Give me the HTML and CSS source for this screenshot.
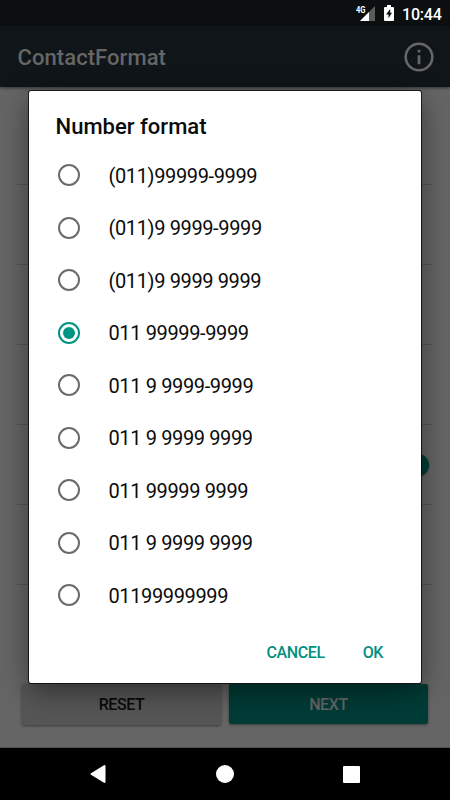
FILE: index.html
```html
<!DOCTYPE html>
<html lang="en">
<head>
<meta charset="utf-8">
<title>ContactFormat</title>
<link rel="stylesheet" href="styles.css">
</head>
<body>
<div class="screen">
  <header class="status">
    <svg class="signal" width="20" height="18" viewBox="0 0 20 18"><path d="M19 2V17H4z" fill="#5c5c5c"/><path d="M13 8V17H4z" fill="#fff"/><path d="M0 0H10V8H9L6 11H0z" fill="#0b0f10"/><text x="0" y="8.5" class="network" textLength="9.5" lengthAdjust="spacingAndGlyphs">4G</text></svg>
    <svg class="battery" width="10" height="16" viewBox="0 0 10 16"><path d="M3 0H7V2H9.1Q10 2 10 3V15Q10 16 9 16H1Q0 16 0 15V3Q0 2 1 2H3z" fill="#fff"/><path d="M6.2 4L2 9.6H4.5V13.3L8 7.8H6.2z" fill="#0b0f10"/></svg>
    <span class="clock">10:44</span>
  </header>
  <div class="appbar">
    <h1 class="title">ContactFormat</h1>
    <svg class="info" width="30" height="30" viewBox="0 0 30 30"><circle cx="15" cy="15" r="13.3" fill="none" stroke="#666" stroke-width="2.6"/><path d="M13.6 7.8H16.4V10.6H13.6zM13.6 13.2H16.4V22.2H13.6z" fill="#666"/></svg>
  </div>
  <main class="content">
    <div class="settings">
      <div class="setting first"></div>
      <div class="setting"></div>
      <div class="setting"></div>
      <div class="setting"></div>
      <div class="setting switch-row"><span class="thumb"></span></div>
      <div class="setting"></div>
    </div>
    <div class="buttons">
      <button class="button reset">RESET</button>
      <button class="button next">NEXT</button>
    </div>
  </main>
  <nav class="navbar">
    <svg width="16" height="20" viewBox="0 0 16 20"><path d="M14.5 2V18L1.5 10z" fill="#fff" stroke="#fff" stroke-width="2" stroke-linejoin="round"/></svg>
    <svg width="18" height="18" viewBox="0 0 18 18"><circle cx="9" cy="9" r="9" fill="#fff"/></svg>
    <svg width="17" height="17" viewBox="0 0 17 17"><rect width="17" height="17" rx="1" fill="#fff"/></svg>
  </nav>
  <section class="dialog">
    <h2 class="heading">Number format</h2>
    <div class="options">
      <label class="option"><span class="radio"></span><span class="label">(011)99999-9999</span></label>
      <label class="option"><span class="radio"></span><span class="label">(011)9 9999-9999</span></label>
      <label class="option"><span class="radio"></span><span class="label">(011)9 9999 9999</span></label>
      <label class="option"><span class="radio checked"></span><span class="label">011 99999-9999</span></label>
      <label class="option"><span class="radio"></span><span class="label">011 9 9999-9999</span></label>
      <label class="option"><span class="radio"></span><span class="label">011 9 9999 9999</span></label>
      <label class="option"><span class="radio"></span><span class="label">011 99999 9999</span></label>
      <label class="option"><span class="radio"></span><span class="label">011 9 9999 9999</span></label>
      <label class="option"><span class="radio"></span><span class="label">01199999999</span></label>
    </div>
    <div class="actions"><span>CANCEL</span><span>OK</span></div>
  </section>
</div>
</body>
</html>
```
FILE: styles.css
```css
* { box-sizing: border-box; }
body { margin: 0; font-family: Roboto, sans-serif; }
h1, h2 { margin: 0; font-weight: 500; }
svg { display: block; flex: none; }
.screen { position: relative; width: 450px; height: 800px; overflow: hidden; display: flex; flex-direction: column; background: #656565; }
.status { height: 26px; background: #0b0f10; display: flex; align-items: flex-start; padding: 4px 8px 0 356px; color: #fff; }
.network { font: 700 9px Roboto, sans-serif; fill: #fff; }
.battery { margin: 1px 0 0 8px; }
.clock { margin-left: 8px; font-size: 16px; line-height: 21px; font-weight: 500; letter-spacing: -.2px; white-space: nowrap; }
.appbar { height: 61px; background: #0f1518; display: flex; align-items: center; justify-content: space-between; padding: 0 16px 0 17.5px; box-shadow: 0 1px 3px rgba(0,0,0,.5); z-index: 1; }
.title { font-size: 22px; line-height: 28px; letter-spacing: .07px; color: #666; padding-top: 3px; }
.content { flex: 1; }
.settings { padding: 0 18px 0 17px; height: 597px; }
.setting { height: 80px; border-bottom: 1px solid #555; }
.first { height: 98px; }
.switch-row { display: flex; align-items: center; justify-content: flex-end; }
.thumb { width: 22px; height: 22px; border-radius: 50%; background: #003c36; margin-right: 3px; box-shadow: 0 1px 2px rgba(0,0,0,.4); }
.buttons { display: flex; gap: 8px; padding: 0 22px 0 22px; }
.button { flex: 1; height: 40px; padding: 0; border: 0; border-radius: 2px; font: 500 16px Roboto, sans-serif; letter-spacing: -.4px; box-shadow: 0 1px 3px rgba(0,0,0,.4); }
.reset { background: #565656; color: #0a0a0a; height: 41px; }
.next { background: #003c36; color: #666; }
.navbar { height: 52px; background: #000; display: flex; align-items: center; justify-content: space-between; padding: 0 90px; box-shadow: 0 -1px 0 #505050; }
.dialog { position: absolute; left: 29px; top: 91px; width: 392px; height: 592px; background: #fff; border-radius: 2px; z-index: 2; padding-top: 22px; box-shadow: 0 0 0 1px rgba(0,0,0,.7), 0 8px 28px rgba(0,0,0,.45); color: #0b0b0b; }
.heading { font-size: 22px; line-height: 28px; padding-left: 26.5px; letter-spacing: .02px; }
.options { padding: 8px 0 0 28.5px; }
.option { height: 52.5px; display: flex; align-items: center; gap: 29px; font-size: 20px; white-space: nowrap; }
.label { letter-spacing: -.37px; padding-top: 1px; }
.radio { width: 22px; height: 22px; border: 2px solid #6b6b6b; border-radius: 50%; flex: none; display: flex; }
.checked { border-color: #009484; }
.checked::after { content: ""; width: 12px; height: 12px; margin: auto; border-radius: 50%; background: #009484; }
.actions { display: flex; justify-content: flex-end; gap: 38px; padding: 21.5px 38px 0 0; font-size: 16px; line-height: 20px; font-weight: 500; letter-spacing: -.4px; color: #009080; }
```
